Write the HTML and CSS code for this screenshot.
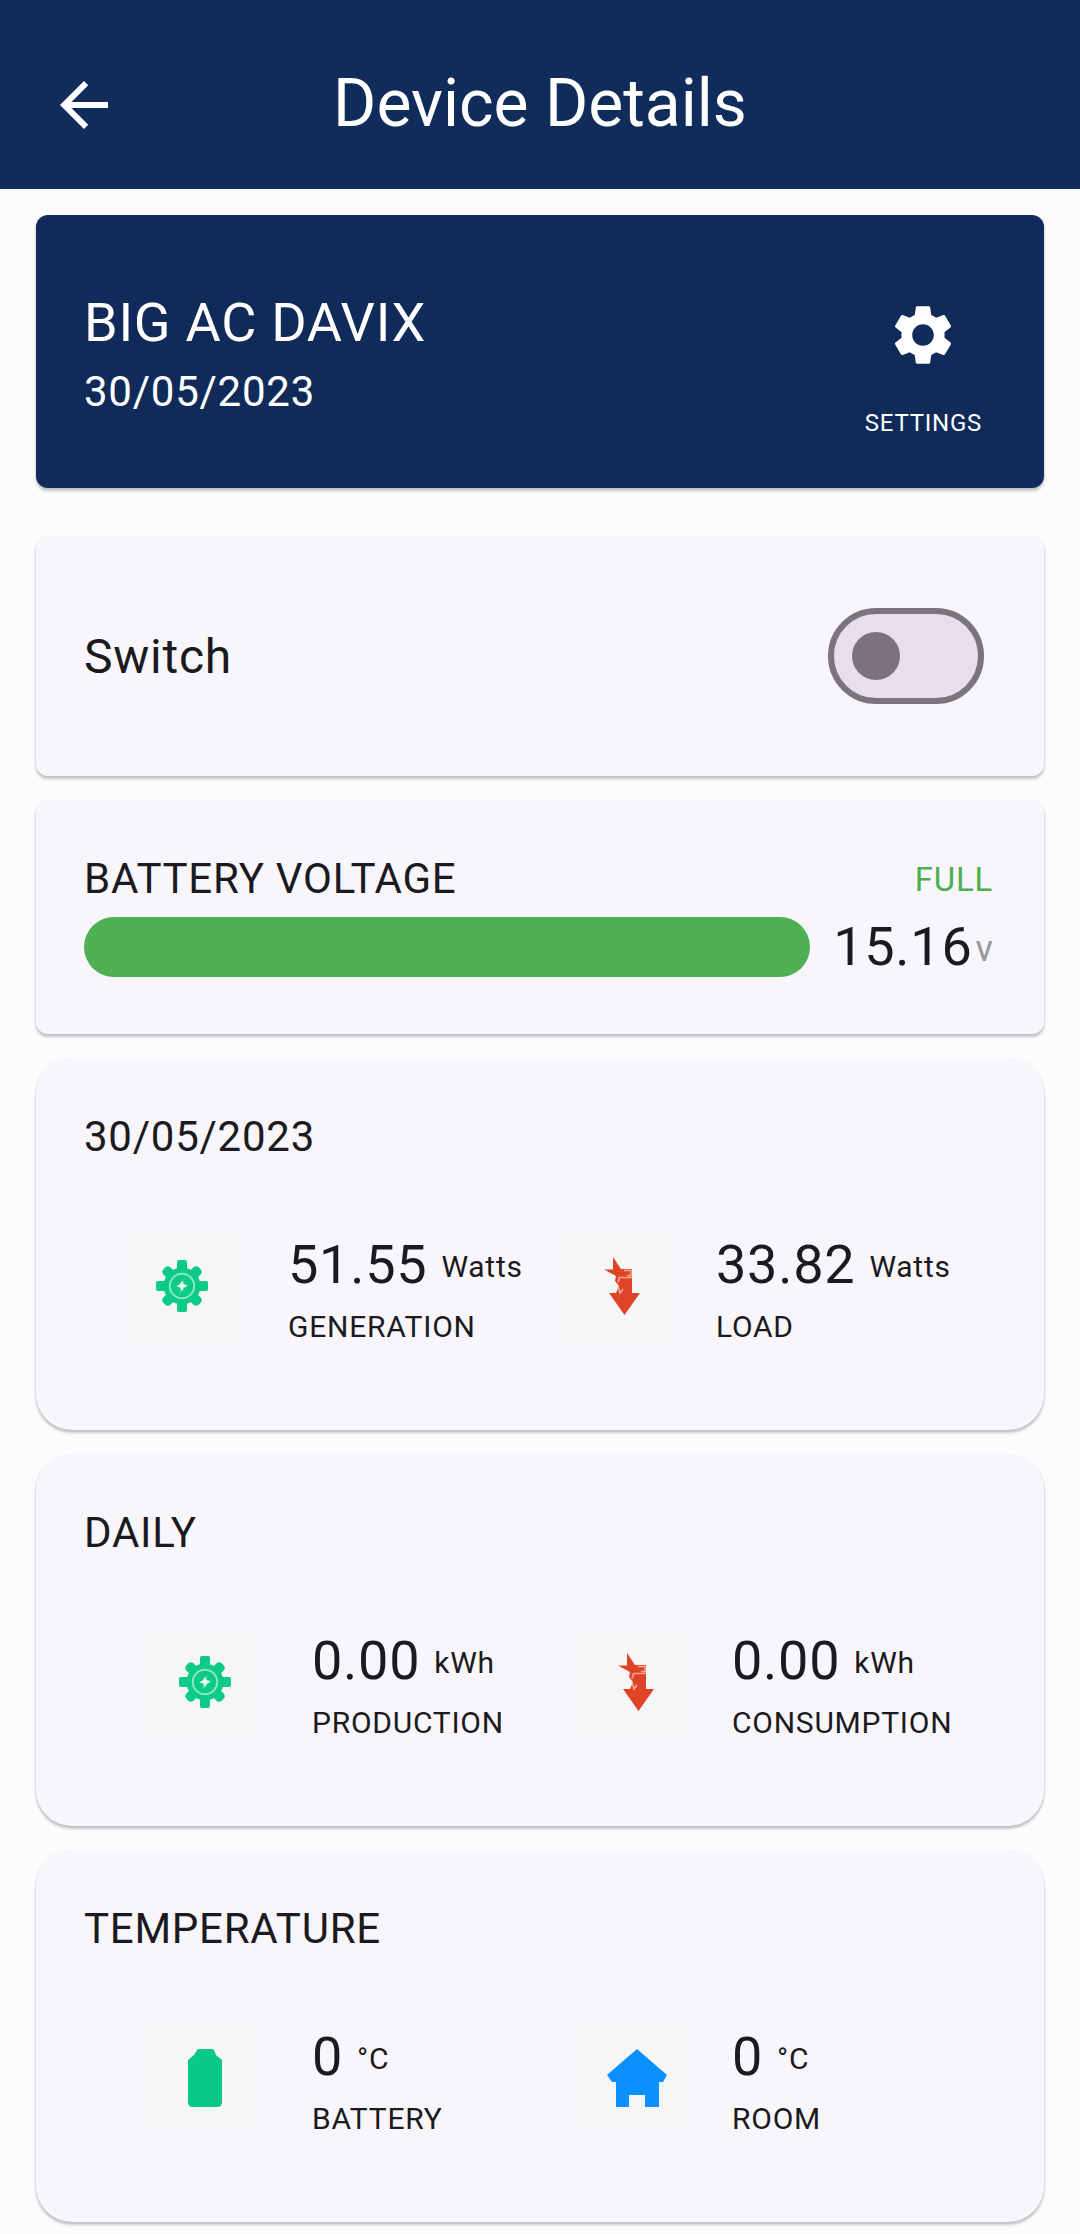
FILE: index.html
```html
<!DOCTYPE html>
<html lang="en">
<head>
<meta charset="utf-8">
<title>Device Details</title>
<link rel="stylesheet" href="styles.css">
</head>
<body>
<svg class="defs" aria-hidden="true">
  <symbol id="gear" viewBox="0 0 54 54">
    <g fill="#0ccb86">
      <circle cx="27" cy="27" r="18.500"/>
      <rect x="22" y="1" width="10" height="52" rx="2"/>
      <rect x="1" y="22" width="52" height="10" rx="2"/>
      <g transform="rotate(45 27 27)"><rect x="22" y="2" width="10" height="50" rx="4"/><rect x="2" y="22" width="50" height="10" rx="4"/></g>
    </g>
    <circle cx="27" cy="27" r="12.200" fill="none" stroke="#8fe6c4" stroke-width="2"/>
    <path d="M30 20l-9 8h5l-2 7 9-10h-5z" fill="#55d9a8"/>
    <path d="M27 21.500l1.800 3.700 3.700 1.800-3.700 1.800-1.800 3.700-1.800-3.700-3.700-1.800 3.700-1.800z" fill="#e4fbf2"/>
  </symbol>
  <symbol id="load" viewBox="0 0 40 62">
    <path d="M10 2l8 12h11v24h8L21.500 60 6 38h7l3-7-4-5 1-5L1 14.500h9z" fill="#df4426"/>
    <path d="M29 22.500H16.500l-1.500 5M15 31l2 7 3-4M21 15.500h7v5h-4" fill="none" stroke="#f3a896" stroke-width="1.600"/>
  </symbol>
</svg>
<header class="topbar">
  <svg class="back" viewBox="0 0 24 24"><path d="M20 11H7.830l5.590-5.590L12 4l-8 8 8 8 1.410-1.410L7.830 13H20z" fill="#fff"/></svg>
  <h1 class="title">Device Details</h1>
</header>
<main class="cards">
  <section class="card device">
    <div class="device-info">
      <div class="device-name">BIG AC DAVIX</div>
      <div class="heading">30/05/2023</div>
    </div>
    <div class="settings">
      <svg class="cog" viewBox="0 0 24 24"><path fill="#fff" d="M19.140 12.940c.040-.300.060-.610.060-.940 0-.320-.020-.640-.070-.940l2.030-1.580c.180-.140.230-.410.120-.610l-1.920-3.320c-.120-.220-.370-.290-.590-.220l-2.390.960c-.500-.380-1.030-.700-1.620-.940l-.360-2.540c-.040-.240-.240-.410-.480-.410h-3.840c-.240 0-.430.170-.470.410l-.360 2.540c-.590.240-1.130.570-1.620.940l-2.390-.960c-.220-.080-.470 0-.590.220L2.740 8.870c-.120.210-.080.470.120.610l2.030 1.580c-.050.300-.090.630-.090.940s.020.640.070.940l-2.030 1.580c-.180.140-.230.410-.120.610l1.920 3.320c.120.220.370.290.590.220l2.390-.960c.500.380 1.030.700 1.620.940l.360 2.540c.050.240.240.410.480.410h3.840c.240 0 .440-.170.470-.410l.360-2.540c.590-.240 1.130-.560 1.620-.940l2.390.960c.220.080.470 0 .590-.220l1.920-3.320c.120-.220.070-.470-.120-.610l-2.010-1.580zM12 15.600c-1.980 0-3.600-1.620-3.600-3.600s1.620-3.600 3.600-3.600 3.600 1.620 3.600 3.600-1.620 3.600-3.600 3.600z"/></svg>
      <span class="settings-label">SETTINGS</span>
    </div>
  </section>

  <section class="card switch-card">
    <span class="switch-label">Switch</span>
    <span class="toggle"><span class="thumb"></span></span>
  </section>

  <section class="card battery">
    <div class="battery-head"><span class="heading">BATTERY VOLTAGE</span><span class="full">FULL</span></div>
    <div class="battery-row">
      <div class="bar"></div>
      <div class="volts"><span class="value">15.16</span><span class="volt-unit">v</span></div>
    </div>
  </section>

  <section class="card panel power">
    <div class="heading">30/05/2023</div>
    <div class="stats">
      <div class="tile"><svg class="i-gear"><use href="#gear"/></svg></div>
      <div class="stat"><div class="reading"><span class="value">51.55</span><span class="unit">Watts</span></div><div class="label">GENERATION</div></div>
      <div class="tile"><svg class="i-load"><use href="#load"/></svg></div>
      <div class="stat"><div class="reading"><span class="value">33.82</span><span class="unit">Watts</span></div><div class="label">LOAD</div></div>
    </div>
  </section>

  <section class="card panel">
    <div class="heading">DAILY</div>
    <div class="stats">
      <div class="tile"><svg class="i-gear"><use href="#gear"/></svg></div>
      <div class="stat"><div class="reading"><span class="value">0.00</span><span class="unit">kWh</span></div><div class="label">PRODUCTION</div></div>
      <div class="tile"><svg class="i-load"><use href="#load"/></svg></div>
      <div class="stat"><div class="reading"><span class="value">0.00</span><span class="unit">kWh</span></div><div class="label">CONSUMPTION</div></div>
    </div>
  </section>

  <section class="card panel">
    <div class="heading">TEMPERATURE</div>
    <div class="stats">
      <div class="tile"><svg class="i-batt" viewBox="0 0 34 58"><path d="M11 0h13l2 1 2 5 6 5v42q0 5-5 5H5q-5 0-5-5V11l6-5 3-5z" fill="#0ac987"/></svg></div>
      <div class="stat"><div class="reading"><span class="value">0</span><span class="unit">°C</span></div><div class="label">BATTERY</div></div>
      <div class="tile"><svg class="i-home" viewBox="0 0 60 58"><path d="M30 0l30 26-4 7h-4v25H38V46H22v12H9V33H5l-5-7z" fill="#0a90ff"/></svg></div>
      <div class="stat"><div class="reading"><span class="value">0</span><span class="unit">°C</span></div><div class="label">ROOM</div></div>
    </div>
  </section>
</main>
</body>
</html>
```
FILE: styles.css
```css
* { box-sizing: border-box; }
body { margin: 0; height: 2234px; overflow: hidden; background: #fefbff; color: #1b1a20; font-family: Roboto, sans-serif; }
.defs { display: none; }
svg { display: block; }

.topbar { height: 189px; padding: 18px 48px 0; display: grid; grid-template-columns: 72px 1fr 72px; align-items: center; background: #102c5b; color: #fff; }
.back { width: 72px; height: 72px; margin-top: 2px; }
.title { margin: 0; font-weight: 400; font-size: 66px; line-height: 84px; text-align: center; }

.cards { padding: 26px 36px 0; display: flex; flex-direction: column; gap: 24px; }
.card { padding: 0 48px; background: #f8f6fb; border-radius: 12px; box-shadow: 0 3px 3px rgba(0,0,0,.2), 0 1px 3px rgba(0,0,0,.1); }
.heading { font-size: 42px; line-height: 60px; letter-spacing: .75px; }
.value { font-size: 54px; line-height: 78px; letter-spacing: .75px; }

.device { height: 273px; margin-bottom: 24px; padding-right: 62px; display: flex; justify-content: space-between; align-items: center; background: #102b5a; color: #fff; }
.device-info { padding-top: 1px; }
.device-name { font-size: 54px; line-height: 79px; letter-spacing: .75px; }
.settings { padding-top: 37px; display: flex; flex-direction: column; align-items: center; gap: 34px; }
.cog { width: 72px; height: 72px; }
.settings-label { font-size: 24px; line-height: 36px; letter-spacing: .75px; }

.switch-card { height: 240px; padding-right: 60px; display: flex; justify-content: space-between; align-items: center; }
.switch-label { font-size: 48px; letter-spacing: .75px; }
.toggle { width: 156px; height: 96px; padding-left: 18px; display: flex; align-items: center; border: 6px solid #79747e; border-radius: 48px; background: #e7dfea; }
.thumb { width: 48px; height: 48px; border-radius: 50%; background: #7d7281; }

.battery { height: 234px; padding-top: 49px; }
.battery-head { display: flex; justify-content: space-between; align-items: center; }
.full { margin-right: 3px; font-size: 33px; letter-spacing: .75px; color: #4caf50; }
.battery-row { margin-top: 8px; display: flex; align-items: center; justify-content: space-between; height: 60px; }
.bar { width: 726px; height: 60px; border-radius: 30px; background: #4eaf53; }
.volts { display: flex; align-items: center; margin-right: 3px; }
.volt-unit { padding: 3px 0 0 3px; font-size: 36px; color: #99979c; }

.panel { height: 372px; padding-top: 49px; border-radius: 36px; }
.stats { margin-top: 59px; padding-left: 61px; display: grid; grid-template-columns: 167px 265px 155px 1fr; }
.tile { width: 112px; height: 102px; margin-top: 9px; display: flex; justify-content: center; align-items: center; background: #f7f6f7; }
.tile svg { margin-left: 8px; }
.power .stats { padding-left: 44px; grid-template-columns: 160px 273px 155px 1fr; }
.power .tile { height: 112px; margin-top: 4px; }
.power .tile .i-gear { margin: 0 5px 0 0; }
.power .tile .i-load { margin-left: 11px; }
.reading { display: flex; align-items: center; gap: 14px; }
.unit { padding-top: 2px; font-size: 30px; letter-spacing: .75px; }
.label { padding-top: 1px; font-size: 30px; line-height: 44px; letter-spacing: .75px; }
.i-gear { width: 54px; height: 54px; }
.i-load { width: 40px; height: 62px; }
.i-batt { width: 34px; height: 58px; }
.i-home { width: 60px; height: 58px; }
```
